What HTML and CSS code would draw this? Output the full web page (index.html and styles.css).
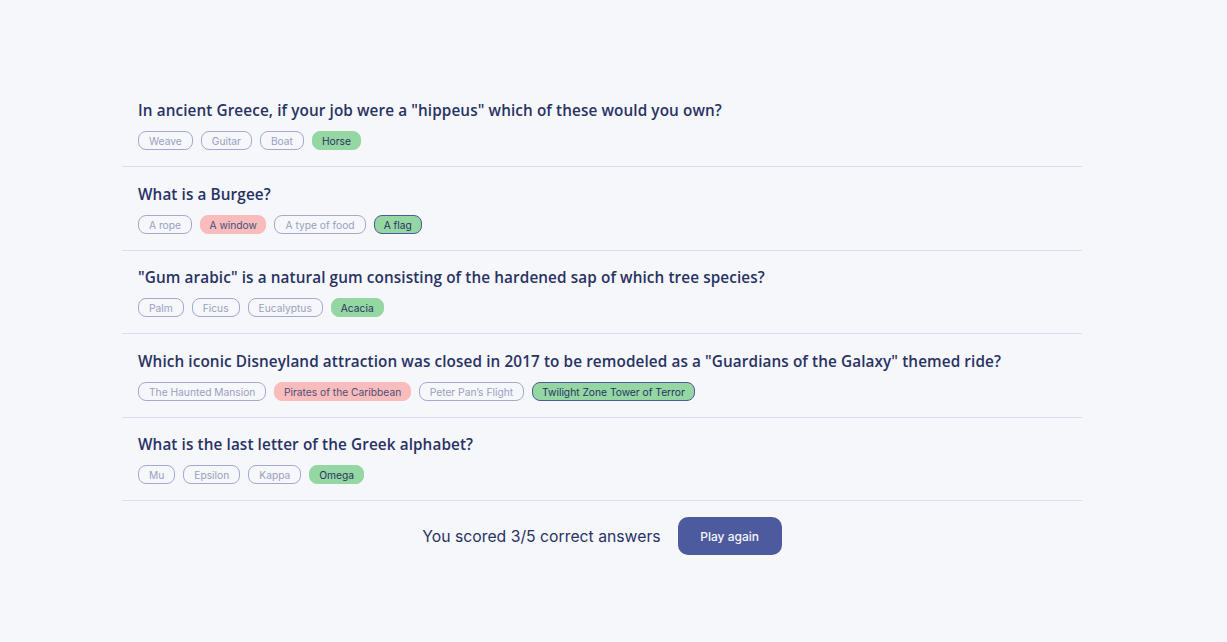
FILE: index.html
```html
<!DOCTYPE html>
<html lang="en">
<head>
<meta charset="utf-8">
<title>Quizzical</title>
<link rel="stylesheet" href="styles.css">
</head>
<body>
<main class="quiz">
  <section class="question">
    <h2 class="question-title">In ancient Greece, if your job were a "hippeus" which of these would you own?</h2>
    <div class="answers">
      <span class="answer dim">Weave</span>
      <span class="answer dim">Guitar</span>
      <span class="answer dim">Boat</span>
      <span class="answer correct">Horse</span>
    </div>
  </section>
  <section class="question">
    <h2 class="question-title">What is a Burgee?</h2>
    <div class="answers">
      <span class="answer dim">A rope</span>
      <span class="answer wrong">A window</span>
      <span class="answer dim">A type of food</span>
      <span class="answer correct chosen">A flag</span>
    </div>
  </section>
  <section class="question">
    <h2 class="question-title">"Gum arabic" is a natural gum consisting of the hardened sap of which tree species?</h2>
    <div class="answers">
      <span class="answer dim">Palm</span>
      <span class="answer dim">Ficus</span>
      <span class="answer dim">Eucalyptus</span>
      <span class="answer correct">Acacia</span>
    </div>
  </section>
  <section class="question">
    <h2 class="question-title">Which iconic Disneyland attraction was closed in 2017 to be remodeled as a "Guardians of the Galaxy" themed ride?</h2>
    <div class="answers">
      <span class="answer dim">The Haunted Mansion</span>
      <span class="answer wrong">Pirates of the Caribbean</span>
      <span class="answer dim">Peter Pan’s Flight</span>
      <span class="answer correct chosen">Twilight Zone Tower of Terror</span>
    </div>
  </section>
  <section class="question">
    <h2 class="question-title">What is the last letter of the Greek alphabet?</h2>
    <div class="answers">
      <span class="answer dim">Mu</span>
      <span class="answer dim">Epsilon</span>
      <span class="answer dim">Kappa</span>
      <span class="answer correct">Omega</span>
    </div>
  </section>
  <footer class="result">
    <p class="score">You scored 3/5 correct answers</p>
    <button class="play-btn" type="button">Play again</button>
  </footer>
</main>
</body>
</html>
```

FILE: styles.css
```css
* { box-sizing: border-box; }

html, body {
  margin: 0;
  padding: 0;
  background: #F5F7FB;
}

body {
  font-family: Inter, "Liberation Sans", sans-serif;
  color: #293264;
  padding: 83.5px 23px 0 0;
}

.quiz {
  width: 960px;
  margin: 0 auto;
}

.question {
  padding: 16.5px 16px 16px;
  border-bottom: 1px solid #DBDEF0;
}

.question-title {
  margin: 0 0 11px;
  font-family: "Open Sans", sans-serif;
  font-weight: 600;
  font-size: 15.3px;
  line-height: 20px;
  color: #293264;
  letter-spacing: 0.1px;
}

.answers {
  display: flex;
  gap: 8px;
}

.answer {
  display: inline-block;
  font-size: 10.24px;
  line-height: 12px;
  padding: 3px 10px 2px;
  border: 1px solid transparent;
  border-radius: 8px;
  color: #293264;
}

.answer.dim {
  border-color: #A3A9D0;
  color: #9A9FBD;
}

.answer.correct {
  background: #94D7A2;
  border-color: #94D7A2;
  padding-left: 9px;
  padding-right: 9px;
}

.answer.correct.chosen {
  border-color: #4D5B9E;
}

.answer.wrong {
  background: #F8BCBC;
  border-color: #F8BCBC;
  color: #4A4F78;
  padding-left: 8.5px;
  padding-right: 8.5px;
}

.result {
  display: flex;
  justify-content: center;
  align-items: center;
  gap: 17px;
  margin-top: 16px;
}

.score {
  margin: 0;
  font-size: 15.75px;
  color: #293264;
}

.play-btn {
  width: 104px;
  height: 38px;
  border: none;
  border-radius: 10px;
  background: #4D5B9E;
  color: #F5F7FB;
  font-family: Inter, "Liberation Sans", sans-serif;
  font-size: 12px;
  font-weight: 500;
  cursor: pointer;
}
```
